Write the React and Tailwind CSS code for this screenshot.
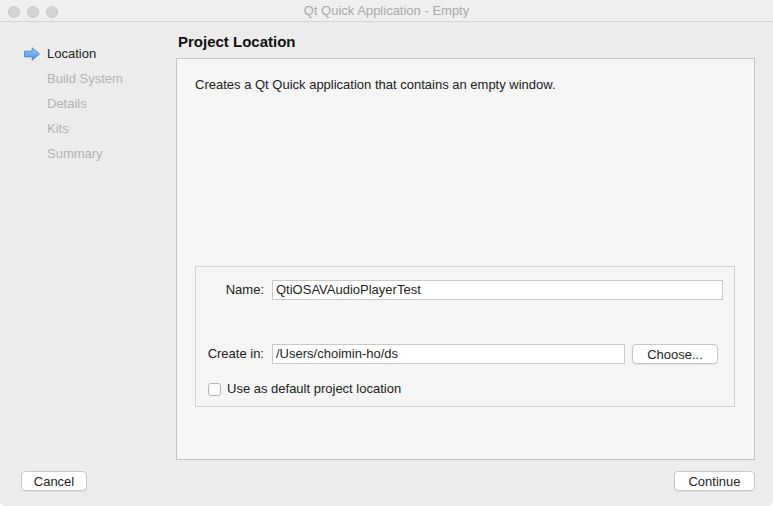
const steps = [
  { label: "Location", active: true },
  { label: "Build System" },
  { label: "Details" },
  { label: "Kits" },
  { label: "Summary" },
];

function StepArrow() {
  return (
    <svg width="16" height="14" viewBox="0 0 16 14">
      <defs>
        <linearGradient id="arrowFill" x1="0" y1="0" x2="0" y2="1">
          <stop offset="0" stopColor="#9ccaf7" />
          <stop offset="1" stopColor="#4a8fe3" />
        </linearGradient>
      </defs>
      <path
        d="M0.5 4.2 H8.2 V0.8 L15.4 7 L8.2 13.2 V9.8 H0.5 Z"
        fill="url(#arrowFill)"
        stroke="#4079c8"
        strokeWidth="0.8"
        strokeLinejoin="round"
      />
    </svg>
  );
}

function MacButton({ children, className = "" }) {
  return (
    <button
      className={`h-[20px] rounded-[4px] border border-[#c6c6c6] bg-white text-[13px] leading-none text-[#262626] shadow-[0_1px_0_rgba(0,0,0,0.06)] ${className}`}
    >
      {children}
    </button>
  );
}

function TextField({ value, className = "" }) {
  return (
    <div
      className={`h-[20px] border border-[#c9c9c9] bg-white px-[3px] flex items-center text-[13px] text-[#1e1e1e] ${className}`}
    >
      {value}
    </div>
  );
}

export default function App() {
  return (
    <div className="w-[773px] h-[506px] bg-white font-['Liberation_Sans',Arial,sans-serif] text-[13px] text-[#222]">
      <div className="w-full h-full bg-[#ececec] rounded-b-[5px] flex flex-col overflow-hidden">
        {/* title bar */}
        <div className="relative h-[22px] shrink-0 bg-[#efefef] border-b border-[#d3d3d3] flex items-center justify-center">
          <div className="absolute left-[8px] top-[6px] flex gap-[7px]">
            <span className="w-[12px] h-[12px] rounded-full bg-[#d4d4d4] border border-[#c8c8c8]" />
            <span className="w-[12px] h-[12px] rounded-full bg-[#d4d4d4] border border-[#c8c8c8]" />
            <span className="w-[12px] h-[12px] rounded-full bg-[#d4d4d4] border border-[#c8c8c8]" />
          </div>
          <span className="text-[13px] text-[#a9a9a9]">Qt Quick Application - Empty</span>
        </div>

        {/* content */}
        <div className="flex h-[438px] shrink-0">
          <div className="w-[176px] shrink-0 pt-[19px] pl-[24px]">
            {steps.map((step) => (
              <div key={step.label} className="h-[25px] flex items-center">
                <span className="w-[23px] flex items-center">
                  {step.active && <StepArrow />}
                </span>
                <span className={step.active ? "text-[#1f1f1f]" : "text-[#b3b3b3]"}>
                  {step.label}
                </span>
              </div>
            ))}
          </div>

          <div className="flex-1 flex flex-col pt-[11px] pr-[18px]">
            <div className="h-[18px] pl-[2px] flex items-center text-[15px] font-bold text-[#111]">
              Project Location
            </div>
            <div className="mt-[7px] h-[402px] shrink-0 border border-[#c3c3c3] bg-[#f5f5f5] flex flex-col pl-[18px] pr-[19px] pt-[18px] pb-[52px]">
              <p className="leading-[16px]">Creates a Qt Quick application that contains an empty window.</p>
              <div className="flex-1" />
              <div className="h-[141px] shrink-0 border border-[#d2d2d2] pt-[13px] pl-[9px]">
                <div className="flex items-center">
                  <span className="w-[59px] text-right whitespace-nowrap">Name:</span>
                  <TextField value="QtiOSAVAudioPlayerTest" className="ml-[8px] w-[451px]" />
                </div>
                <div className="flex items-center mt-[44px]">
                  <span className="w-[59px] text-right whitespace-nowrap">Create in:</span>
                  <TextField value="/Users/choimin-ho/ds" className="ml-[8px] w-[353px]" />
                  <MacButton className="ml-[7px] w-[86px]">Choose...</MacButton>
                </div>
                <div className="flex items-center mt-[18px] h-[14px] pl-[3px]">
                  <span className="w-[13px] h-[13px] rounded-[3px] border border-[#b5b5b5] bg-white" />
                  <span className="ml-[6px]">Use as default project location</span>
                </div>
              </div>
            </div>
          </div>
        </div>

        {/* footer */}
        <div className="flex-1 flex justify-between items-start pt-[11px] pl-[21px] pr-[18px]">
          <MacButton className="w-[66px]">Cancel</MacButton>
          <MacButton className="w-[81px]">Continue</MacButton>
        </div>
      </div>
    </div>
  );
}
